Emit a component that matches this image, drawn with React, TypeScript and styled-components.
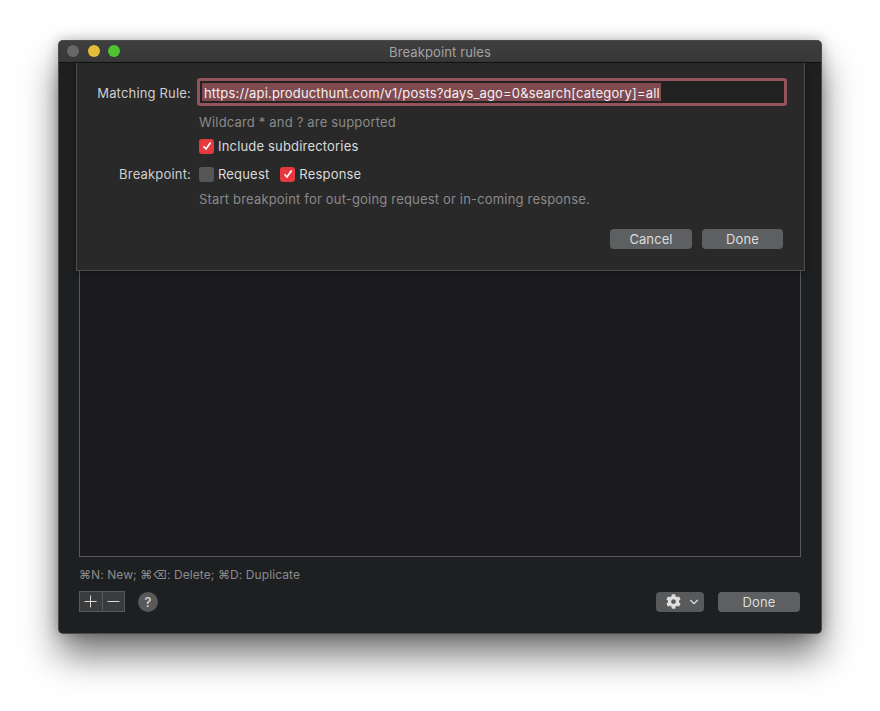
import { createGlobalStyle, styled } from 'styled-components';
import { FaCog } from 'react-icons/fa';
import { ChevronDown } from 'lucide-react';

const GlobalStyle = createGlobalStyle`
  html, body { margin: 0; background: #fff; }
  body { font-family: Inter, "Liberation Sans", sans-serif; font-size: 13px; }
`;

const Page = styled.div`
  width: 880px;
  height: 711px;
  box-sizing: border-box;
  padding: 41px 59px 0;
  overflow: hidden;
`;

const Window = styled.div`
  position: relative;
  width: 762px;
  height: 592px;
  display: flex;
  flex-direction: column;
  background: #1e1f21;
  border-radius: 4px;
  box-shadow: 0 0 0 1px #4a4a4a, 0 22px 36px rgba(0, 0, 0, 0.55), 0 0 14px rgba(0, 0, 0, 0.3);
`;

const TitleBar = styled.div`
  position: relative;
  flex: none;
  height: 22px;
  display: flex;
  align-items: center;
  justify-content: center;
  background: linear-gradient(#3e3e3e, #383838);
  border-radius: 4px 4px 0 0;
  border-bottom: 1px solid #111;
  box-sizing: border-box;
  color: #a2a2a2;
  font-size: 13px;
  letter-spacing: 0.12px;
`;

const Lights = styled.div`
  position: absolute;
  left: 8px;
  top: 4px;
  display: flex;
  gap: 8.7px;
`;

const Light = styled.span<{ $color: string }>`
  width: 12px;
  height: 12px;
  border-radius: 50%;
  background: ${p => p.$color};
`;

const Content = styled.div`
  flex: 1;
  display: flex;
  flex-direction: column;
  padding: 0 20px 21px;
  min-height: 0;
`;

const Table = styled.div`
  flex: 1;
  background: #1c1c1e;
  border: 1px solid #58595a;
  border-top: 0;
`;

const Shortcuts = styled.div`
  margin-top: 10px;
  height: 16px;
  line-height: 16px;
  color: #8b8c8d;
  font-size: 12px;
  letter-spacing: 0.08px;
`;

const Footer = styled.div`
  margin: 8px 1px 0 0;
  height: 21px;
  display: flex;
  align-items: center;
`;

const Segment = styled.div`
  display: flex;
  width: 46px;
  height: 21px;
  box-sizing: border-box;
  border: 1px solid #58595a;
  background: #3a3b3c;
`;

const SegmentButton = styled.button`
  flex: 1;
  padding: 0;
  border: 0;
  background: none;
  display: flex;
  align-items: center;
  justify-content: center;
  & + & { border-left: 1px solid #58595a; }
`;

const HelpButton = styled.button`
  width: 20px;
  height: 20px;
  margin-left: 13px;
  padding: 0;
  border: 0;
  border-radius: 50%;
  background: #58595a;
  color: #dcdcdc;
  font: 500 13px Inter, sans-serif;
`;

const Spacer = styled.div`
  flex: 1;
`;

const GearButton = styled.button`
  width: 48px;
  height: 20px;
  margin-right: 14px;
  padding: 0 3px 0 10px;
  border: 0;
  border-radius: 4px;
  background: #58595a;
  color: #dedede;
  display: flex;
  align-items: center;
  justify-content: space-between;
`;

const PushButton = styled.button<{ $width: number }>`
  width: ${p => p.$width}px;
  height: 20px;
  padding: 0;
  border: 0;
  border-radius: 4px;
  background: #5e5f60;
  color: #dcdcdc;
  font: 400 13px Inter, sans-serif;
  letter-spacing: 0.1px;
`;

const Sheet = styled.div`
  position: absolute;
  left: 17px;
  top: 22px;
  width: 729px;
  height: 208px;
  box-sizing: border-box;
  padding: 15px 18px 0 0;
  background: #292929;
  border: 1px solid #4c4c4c;
  border-top: 0;
  box-shadow: 0 2px 6px rgba(0, 0, 0, 0.35);
  display: flex;
  flex-direction: column;
`;

const Row = styled.div<{ $top?: number }>`
  display: flex;
  align-items: center;
  min-height: 16px;
  margin-top: ${p => p.$top ?? 0}px;
  padding-left: 122px;
  position: relative;
  color: #dadada;
  letter-spacing: 0.18px;
`;

const Label = styled.span<{ $drop?: number }>`
  position: absolute;
  left: 0;
  width: 114px;
  margin-top: ${p => p.$drop ?? 0}px;
  text-align: right;
  color: #cfcfcf;
`;

const Hint = styled.span`
  color: #8a8a8a;
`;

const Field = styled.div`
  flex: 1;
  height: 28px;
  box-sizing: border-box;
  border: 3px solid #94525a;
  border-radius: 3px;
  background: #222222;
  display: flex;
  align-items: center;
  padding-left: 2px;
  margin: 0 -1px 0 -2px;
`;

const Selected = styled.span`
  height: 18px;
  line-height: 20px;
  padding: 0 1px 0 2px;
  background: #7f4a50;
  color: #f5f0f0;
  letter-spacing: 0.16px;
  white-space: nowrap;
`;

const Check = styled.span<{ $on?: boolean }>`
  flex: none;
  width: 15px;
  height: 15px;
  margin-right: 4px;
  border-radius: 3px;
  background: ${p => (p.$on ? '#e5383f' : '#555657')};
  display: flex;
  align-items: center;
  justify-content: center;
`;

const CheckLabel = styled.span`
  margin-right: 11px;
`;

const SheetActions = styled.div`
  margin-top: 22px;
  display: flex;
  justify-content: flex-end;
  gap: 10px;
  padding-right: 3px;
`;

function Tick() {
  return (
    <svg width="10" height="10" viewBox="0 0 10 10" fill="none">
      <path d="M1.5 5.2 4 8 8.6 1.6" stroke="#fff" strokeWidth="1.7" />
    </svg>
  );
}

function Glyph({ minus }: { minus?: boolean }) {
  return (
    <svg width="13" height="13" viewBox="0 0 13 13" stroke="#d8d8d8" strokeWidth="1">
      <path d="M0.5 6.5H12.5" />
      {!minus && <path d="M6.5 0.5V12.5" />}
    </svg>
  );
}

export default function App() {
  return (
    <Page>
      <GlobalStyle />
      <Window>
        <TitleBar>
          <Lights>
            <Light $color="#68686a" />
            <Light $color="#e6bb36" />
            <Light $color="#4fc332" />
          </Lights>
          Breakpoint rules
        </TitleBar>
        <Content>
          <Table />
          <Shortcuts>⌘N: New; ⌘⌫: Delete; ⌘D: Duplicate</Shortcuts>
          <Footer>
            <Segment>
              <SegmentButton title="Add"><Glyph /></SegmentButton>
              <SegmentButton title="Remove"><Glyph minus /></SegmentButton>
            </Segment>
            <HelpButton>?</HelpButton>
            <Spacer />
            <GearButton title="Settings">
              <FaCog size={15} />
              <ChevronDown size={14} />
            </GearButton>
            <PushButton $width={82}>Done</PushButton>
          </Footer>
        </Content>
        <Sheet>
          <Row>
            <Label $drop={2}>Matching Rule:</Label>
            <Field>
              <Selected>https://api.producthunt.com/v1/posts?days_ago=0&amp;search[category]=all</Selected>
            </Field>
          </Row>
          <Row $top={8}><Hint>Wildcard * and ? are supported</Hint></Row>
          <Row $top={8}>
            <Check $on><Tick /></Check>
            <CheckLabel>Include subdirectories</CheckLabel>
          </Row>
          <Row $top={12}>
            <Label>Breakpoint:</Label>
            <Check />
            <CheckLabel>Request</CheckLabel>
            <Check $on><Tick /></Check>
            <CheckLabel>Response</CheckLabel>
          </Row>
          <Row $top={9}><Hint>Start breakpoint for out-going request or in-coming response.</Hint></Row>
          <SheetActions>
            <PushButton $width={82}>Cancel</PushButton>
            <PushButton $width={81}>Done</PushButton>
          </SheetActions>
        </Sheet>
      </Window>
    </Page>
  );
}
